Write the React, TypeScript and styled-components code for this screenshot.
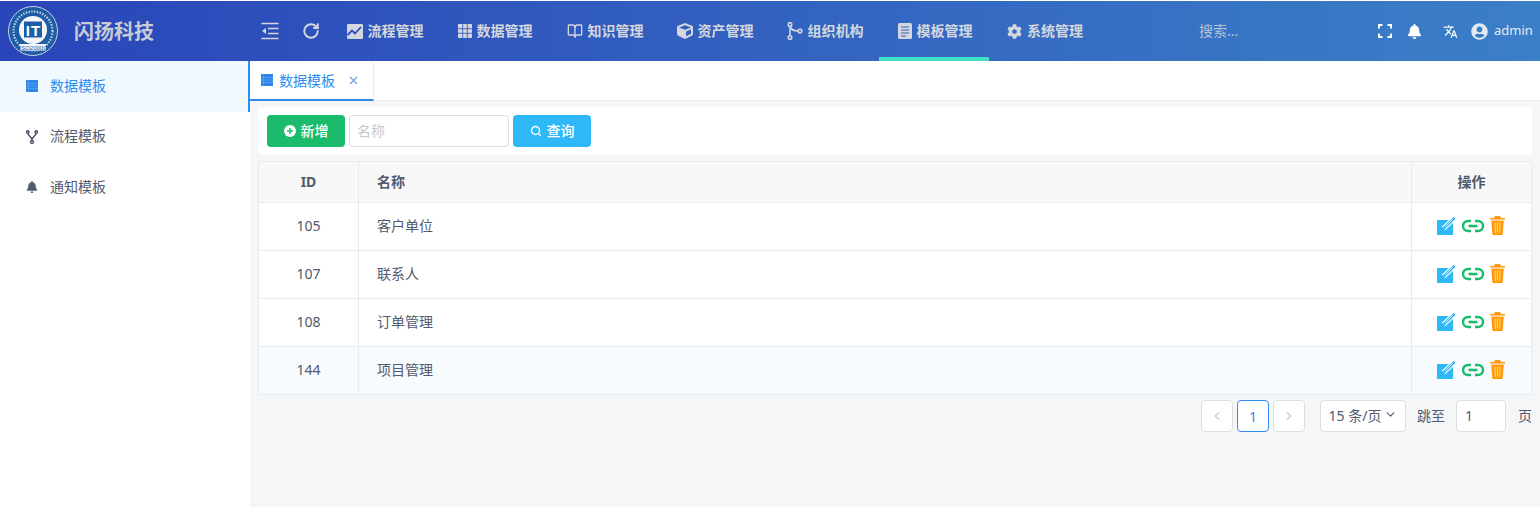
import React from "react";
import styled, { createGlobalStyle } from "styled-components";
import { FaBell, FaCog, FaCube, FaUserCircle } from "react-icons/fa";
import { MdTranslate } from "react-icons/md";
import { LuBookOpen, LuChevronDown, LuChevronLeft, LuChevronRight, LuRotateCw, LuSearch, LuX } from "react-icons/lu";

const GlobalStyle = createGlobalStyle`
  html, body {
    margin: 0;
    padding: 0;
    background: #fff;
    font-family: "Noto Sans", "Noto Sans CJK SC", sans-serif;
    font-size: 14px;
    color: #515a6e;
  }
  * { box-sizing: border-box; }
`;

function Logo() {
  return (
    <svg width="50" height="50" viewBox="0 0 50 50">
      <circle cx="25" cy="25" r="24.5" fill="#1c5da6" stroke="#c9d3e6" strokeWidth="1" />
      <circle cx="25" cy="25" r="19.5" fill="none" stroke="#c4d2e8" strokeWidth="2.2" strokeDasharray="1.4 1.4" />
      <circle cx="25" cy="24" r="14" fill="#f4f6fa" />
      <rect x="16" y="15.5" width="18" height="16" fill="#1c5da6" />
      <text x="25.5" y="29.5" textAnchor="middle" fontSize="15" fontWeight="700" letterSpacing="1" fill="#fff" fontFamily="Liberation Sans">IT</text>
      <rect x="12" y="38" width="26" height="6.5" fill="#f4f6fa" />
      <text x="25" y="43.6" textAnchor="middle" fontSize="6" fill="#1c5da6" fontFamily="Liberation Sans">ISO20000</text>
    </svg>
  );
}

function OutdentIcon() {
  return (
    <svg width="18" height="18" viewBox="0 0 18 18" fill="none" stroke="currentColor" strokeWidth="1.6">
      <path d="M0.5 1.5h17M7 6.5h10.5M7 11.5h10.5M0.5 16.5h17" />
      <path d="M5 6v6L1 9z" fill="currentColor" stroke="none" />
    </svg>
  );
}

function ChartIcon() {
  return (
    <svg width="16" height="15" viewBox="0 0 16 15">
      <rect width="16" height="15" rx="1.2" fill="currentColor" />
      <path fill="none" stroke="#2b4bb9" strokeWidth="1.8" d="M0.5 11l4.5-4.5 3 3 6-6.5" />
    </svg>
  );
}

function GridIcon() {
  return (
    <svg width="14" height="14" viewBox="0 0 14 14">
      <rect width="14" height="14" rx="0.8" fill="currentColor" />
      <path d="M0 4.7h14M0 9.3h14M4.7 0v14M9.3 0v14" stroke="#2d50ba" strokeWidth="0.8" />
    </svg>
  );
}

function BranchIcon({ size = 16 }: { size?: number }) {
  return (
    <svg width={size} height={size + 2} viewBox="0 0 16 18" fill="none" stroke="currentColor" strokeWidth="1.6">
      <circle cx="3" cy="2.5" r="1.8" />
      <circle cx="3" cy="15.5" r="1.8" />
      <circle cx="13" cy="9" r="1.8" />
      <path d="M3 4.3v9.4M3.5 4.5c0.5 3 3 4.5 7.7 4.5" />
    </svg>
  );
}

function FlowIcon() {
  return (
    <svg width="12" height="14" viewBox="0 0 12 14" fill="none" stroke="currentColor" strokeWidth="1.5">
      <circle cx="1.8" cy="2" r="1.2" />
      <circle cx="10.2" cy="2" r="1.2" />
      <circle cx="6" cy="12" r="1.4" />
      <path d="M1.8 3.2c0 3 4.2 3 4.2 7M10.2 3.2c0 3-4.2 3-4.2 7" />
    </svg>
  );
}

function DocIcon() {
  return (
    <svg width="14" height="16" viewBox="0 0 14 16">
      <rect width="14" height="16" rx="1.5" fill="currentColor" />
      <path d="M3 4h8M3 7h8M3 10h8M3 13h5" stroke="#3066bd" strokeWidth="1" />
    </svg>
  );
}

function TableIcon() {
  return (
    <svg width="12" height="12" viewBox="0 0 12 12">
      <rect width="12" height="12" fill="#2e86e8" />
      <path d="M0 3.5h12M0 6h12M0 8.5h12M2.5 0v12" stroke="#6aa9f0" strokeWidth="0.6" />
    </svg>
  );
}

function FullscreenIcon() {
  return (
    <svg width="14" height="14" viewBox="0 0 14 14" fill="none" stroke="#fff" strokeWidth="2">
      <path d="M1 4.5V1h3.5M9.5 1H13v3.5M13 9.5V13H9.5M4.5 13H1V9.5" />
    </svg>
  );
}

function PlusCircleIcon() {
  return (
    <svg width="12" height="12" viewBox="0 0 12 12">
      <circle cx="6" cy="6" r="6" fill="#fff" />
      <path d="M3 6h6M6 3v6" stroke="#1abc6b" strokeWidth="1.4" />
    </svg>
  );
}

function EditIcon() {
  return (
    <svg width="19" height="18" viewBox="0 0 19 18">
      <rect x="0" y="3" width="16" height="15" fill="#2fb8f7" />
      <path d="M6.5 11.5L17 1.5" stroke="#fff" strokeWidth="5" />
      <path d="M6 12L17.5 1" stroke="#2fb8f7" strokeWidth="2.6" />
      <path d="M8 10l8-8" stroke="#dff4fe" strokeWidth="0.8" />
    </svg>
  );
}

function LinkIcon() {
  return (
    <svg width="22" height="14" viewBox="0 0 22 14" fill="none" stroke="#1abc6b" strokeWidth="2.4">
      <path d="M9 2H6a5 5 0 0 0 0 10h3M13 2h3a5 5 0 0 1 0 10h-3M6.5 7h9" />
    </svg>
  );
}

function TrashIcon() {
  return (
    <svg width="15" height="19" viewBox="0 0 15 19">
      <path fill="#ff9a0d" d="M5 0h5l1 2h4v1.6H0V2h4zM1.2 4.6h12.6L12.6 19H2.4z" />
      <path stroke="#ffd9a0" strokeWidth="1" d="M5 6.5l.4 10.5M7.5 6.5V17M10 6.5L9.6 17" />
    </svg>
  );
}

const navItems = [
  { label: "流程管理", icon: <ChartIcon /> },
  { label: "数据管理", icon: <GridIcon /> },
  { label: "知识管理", icon: <LuBookOpen size={16} /> },
  { label: "资产管理", icon: <FaCube size={16} /> },
  { label: "组织机构", icon: <BranchIcon /> },
  { label: "模板管理", icon: <DocIcon />, active: true },
  { label: "系统管理", icon: <FaCog size={15} /> },
];

const rows = [
  { id: 105, name: "客户单位" },
  { id: 107, name: "联系人" },
  { id: 108, name: "订单管理" },
  { id: 144, name: "项目管理", hover: true },
];

export default function App() {
  return (
    <>
      <GlobalStyle />
      <Page>
        <Header>
          <Brand>
            <Logo />
            <BrandName>闪扬科技</BrandName>
          </Brand>
          <Tools>
            <OutdentIcon />
            <LuRotateCw size={18} strokeWidth={2.6} />
          </Tools>
          <Nav>
            {navItems.map((item) => (
              <NavItem key={item.label} $active={item.active}>
                {item.icon}
                <NavLabel>{item.label}</NavLabel>
              </NavItem>
            ))}
          </Nav>
          <Search>搜索...</Search>
          <HeaderRight>
            <FullscreenIcon />
            <FaBell size={15} />
            <TranslateWrap>
              <MdTranslate size={15} />
            </TranslateWrap>
            <UserBox>
              <FaUserCircle size={17} />
              <span>admin</span>
            </UserBox>
          </HeaderRight>
        </Header>
        <Body>
          <Sidebar>
            <SideItem $active>
              <TableIcon />
              <span>数据模板</span>
            </SideItem>
            <SideItem>
              <FlowIcon />
              <span>流程模板</span>
            </SideItem>
            <SideItem>
              <FaBell size={12} />
              <span>通知模板</span>
            </SideItem>
          </Sidebar>
          <Main>
            <TabBar>
              <Tab>
                <TableIcon />
                <span>数据模板</span>
                <LuX size={13} color="#6b9be0" />
              </Tab>
            </TabBar>
            <Content>
              <Toolbar>
                <Button $color="#1abc6b">
                  <PlusCircleIcon />
                  新增
                </Button>
                <NameInput placeholder="名称" />
                <Button $color="#2fb8f7">
                  <LuSearch size={12} strokeWidth={2.6} />
                  查询
                </Button>
              </Toolbar>
              <Table>
                <thead>
                  <tr>
                    <HeadCell $width={100} $pad={2}>ID</HeadCell>
                    <HeadCell $left>名称</HeadCell>
                    <HeadCell $width={120}>操作</HeadCell>
                  </tr>
                </thead>
                <tbody>
                  {rows.map((row) => (
                    <Row key={row.id} $hover={row.hover}>
                      <Cell $pad={2}>{row.id}</Cell>
                      <Cell $left>{row.name}</Cell>
                      <Cell $pad={2}>
                        <Actions>
                          <EditIcon />
                          <LinkIcon />
                          <TrashIcon />
                        </Actions>
                      </Cell>
                    </Row>
                  ))}
                </tbody>
              </Table>
              <Pager>
                <PageButton $disabled>
                  <LuChevronLeft size={14} />
                </PageButton>
                <PageButton $active>1</PageButton>
                <PageButton $disabled>
                  <LuChevronRight size={14} />
                </PageButton>
                <SizeSelect>
                  15 条/页
                  <LuChevronDown size={13} />
                </SizeSelect>
                <JumpLabel>跳至</JumpLabel>
                <JumpInput>1</JumpInput>
                <PageLabel>页</PageLabel>
              </Pager>
            </Content>
          </Main>
        </Body>
      </Page>
    </>
  );
}

const Page = styled.div`
  display: flex;
  flex-direction: column;
  height: 507px;
  padding-top: 1px;
  overflow: hidden;
`;

const Header = styled.header`
  flex-shrink: 0;
  display: flex;
  align-items: center;
  height: 60px;
  background: linear-gradient(90deg, #2a45b9 0%, #3b7fc7 100%);
  color: #d4d7de;
`;

const Brand = styled.div`
  width: 250px;
  flex-shrink: 0;
  display: flex;
  align-items: center;
  gap: 16px;
  padding-left: 8px;
`;

const BrandName = styled.div`
  font-size: 20px;
  font-weight: 700;
  color: #c8ccd6;
  padding-bottom: 2px;
`;

const Tools = styled.div`
  display: flex;
  align-items: center;
  gap: 23px;
  padding-left: 11px;
  width: 79px;
  flex-shrink: 0;
`;

const Nav = styled.nav`
  display: flex;
  height: 100%;
  width: 771px;
  flex-shrink: 0;
`;

const NavItem = styled.div<{ $active?: boolean }>`
  width: 110px;
  display: flex;
  align-items: center;
  justify-content: center;
  gap: 5px;
  padding: 4px 0 0 2px;
  font-size: 14px;
  font-weight: 700;
  border-bottom: 4px solid ${(p) => (p.$active ? "#40e0c4" : "transparent")};
`;

const NavLabel = styled.span`
  padding-bottom: 2px;
`;

const Search = styled.div`
  margin-left: 99px;
  width: 150px;
  color: #b4c2da;
  font-size: 14px;
  padding-bottom: 2px;
`;

const HeaderRight = styled.div`
  display: flex;
  align-items: center;
  color: #fff;
  gap: 15px;
  margin-left: 29px;
`;

const TranslateWrap = styled.div`
  display: flex;
  margin-left: 6px;
`;

const UserBox = styled.div`
  display: flex;
  align-items: center;
  gap: 6px;
  margin-left: -2px;
  font-size: 13px;
  color: #e3e9f3;

  span {
    padding-bottom: 2px;
  }
`;

const Body = styled.div`
  flex: 1;
  display: flex;
  min-height: 0;
`;

const Sidebar = styled.aside`
  width: 250px;
  flex-shrink: 0;
  background: #fff;
`;

const SideItem = styled.div<{ $active?: boolean }>`
  height: 50.5px;
  display: flex;
  align-items: center;
  gap: 12px;
  padding-left: 26px;
  background: ${(p) => (p.$active ? "#f0f9ff" : "#fff")};
  color: ${(p) => (p.$active ? "#2d8cf0" : "#515a6e")};
  border-right: 2px solid ${(p) => (p.$active ? "#2d8cf0" : "transparent")};

  span {
    padding-bottom: 3px;
  }
`;

const Main = styled.main`
  flex: 1;
  display: flex;
  flex-direction: column;
  background: #f5f6f8;
`;

const TabBar = styled.div`
  height: 40px;
  flex-shrink: 0;
  background: #fff;
  display: flex;
  border-bottom: 1px solid #eceef1;
`;

const Tab = styled.div`
  width: 124px;
  height: 40px;
  display: flex;
  align-items: center;
  gap: 6px;
  padding-left: 11px;
  color: #2d8cf0;
  border-bottom: 2px solid #2d8cf0;
  border-right: 1px solid #e8eaec;
  border-radius: 0 4px 0 0;

  svg:last-child {
    margin-left: 6px;
  }
`;

const Content = styled.div`
  flex: 1;
  padding: 6px 8px 0;
`;

const Toolbar = styled.div`
  height: 48px;
  background: #fff;
  border-radius: 4px;
  display: flex;
  align-items: center;
  gap: 4px;
  padding-left: 9px;
  margin-bottom: 6px;
`;

const Button = styled.button<{ $color: string }>`
  width: 78px;
  height: 32px;
  border: none;
  border-radius: 4px;
  background: ${(p) => p.$color};
  color: #fff;
  font-family: inherit;
  font-size: 14px;
  font-weight: 500;
  display: flex;
  align-items: center;
  justify-content: center;
  gap: 5px;
  padding: 0 0 2px;

  svg {
    margin-top: 2px;
  }
`;

const NameInput = styled.input`
  width: 160px;
  height: 32px;
  border: 1px solid #dcdee2;
  border-radius: 4px;
  padding: 0 7px 2px;
  font-family: inherit;
  font-size: 14px;
  outline: none;

  &::placeholder {
    color: #c5c8ce;
  }
`;

const Table = styled.table`
  width: 100%;
  border-collapse: collapse;
  background: #fff;
  table-layout: fixed;
  border: 1px solid #dcdee2;
`;

const HeadCell = styled.th<{ $width?: number; $left?: boolean; $pad?: number }>`
  height: 41px;
  padding: 0 0 ${(p) => p.$pad ?? 3}px ${(p) => (p.$left ? "18px" : "0")};
  width: ${(p) => (p.$width ? `${p.$width}px` : "auto")};
  text-align: ${(p) => (p.$left ? "left" : "center")};
  background: #f8f8f9;
  font-size: 14px;
  font-weight: 700;
  color: #515a6e;
  border: 1px solid #e8eaec;
`;

const Row = styled.tr<{ $hover?: boolean }>`
  background: ${(p) => (p.$hover ? "#f8fbfe" : "#fff")};
`;

const Cell = styled.td<{ $left?: boolean; $pad?: number }>`
  height: 48px;
  padding: 0 0 ${(p) => p.$pad ?? 4}px ${(p) => (p.$left ? "18px" : "0")};
  text-align: ${(p) => (p.$left ? "left" : "center")};
  border: 1px solid #e8eaec;
  font-size: 14px;
  color: #515a6e;
`;

const Actions = styled.div`
  display: flex;
  align-items: center;
  justify-content: center;
  gap: 6px;
  padding-right: 2px;
`;

const Pager = styled.div`
  display: flex;
  align-items: center;
  justify-content: flex-end;
  height: 32px;
  margin-top: 5px;
  gap: 4px;
  color: #515a6e;
`;

const PageButton = styled.div<{ $active?: boolean; $disabled?: boolean }>`
  width: 32px;
  height: 32px;
  display: flex;
  align-items: center;
  justify-content: center;
  border-radius: 4px;
  background: #fff;
  border: 1px solid ${(p) => (p.$active ? "#2d8cf0" : "#dcdee2")};
  color: ${(p) => (p.$active ? "#2d8cf0" : p.$disabled ? "#c5c8ce" : "#515a6e")};
`;

const SizeSelect = styled.div`
  width: 86px;
  height: 32px;
  margin-left: 11px;
  display: flex;
  align-items: center;
  justify-content: center;
  gap: 3px;
  background: #fff;
  border: 1px solid #dcdee2;
  border-radius: 4px;
  padding-bottom: 3px;
`;

const JumpLabel = styled.span`
  margin-left: 7px;
  padding-bottom: 3px;
`;

const JumpInput = styled.div`
  width: 50px;
  height: 32px;
  margin-left: 7px;
  padding: 0 0 1px 8px;
  display: flex;
  align-items: center;
  background: #fff;
  border: 1px solid #dcdee2;
  border-radius: 4px;
`;

const PageLabel = styled.span`
  margin-left: 8px;
  padding-bottom: 3px;
`;
